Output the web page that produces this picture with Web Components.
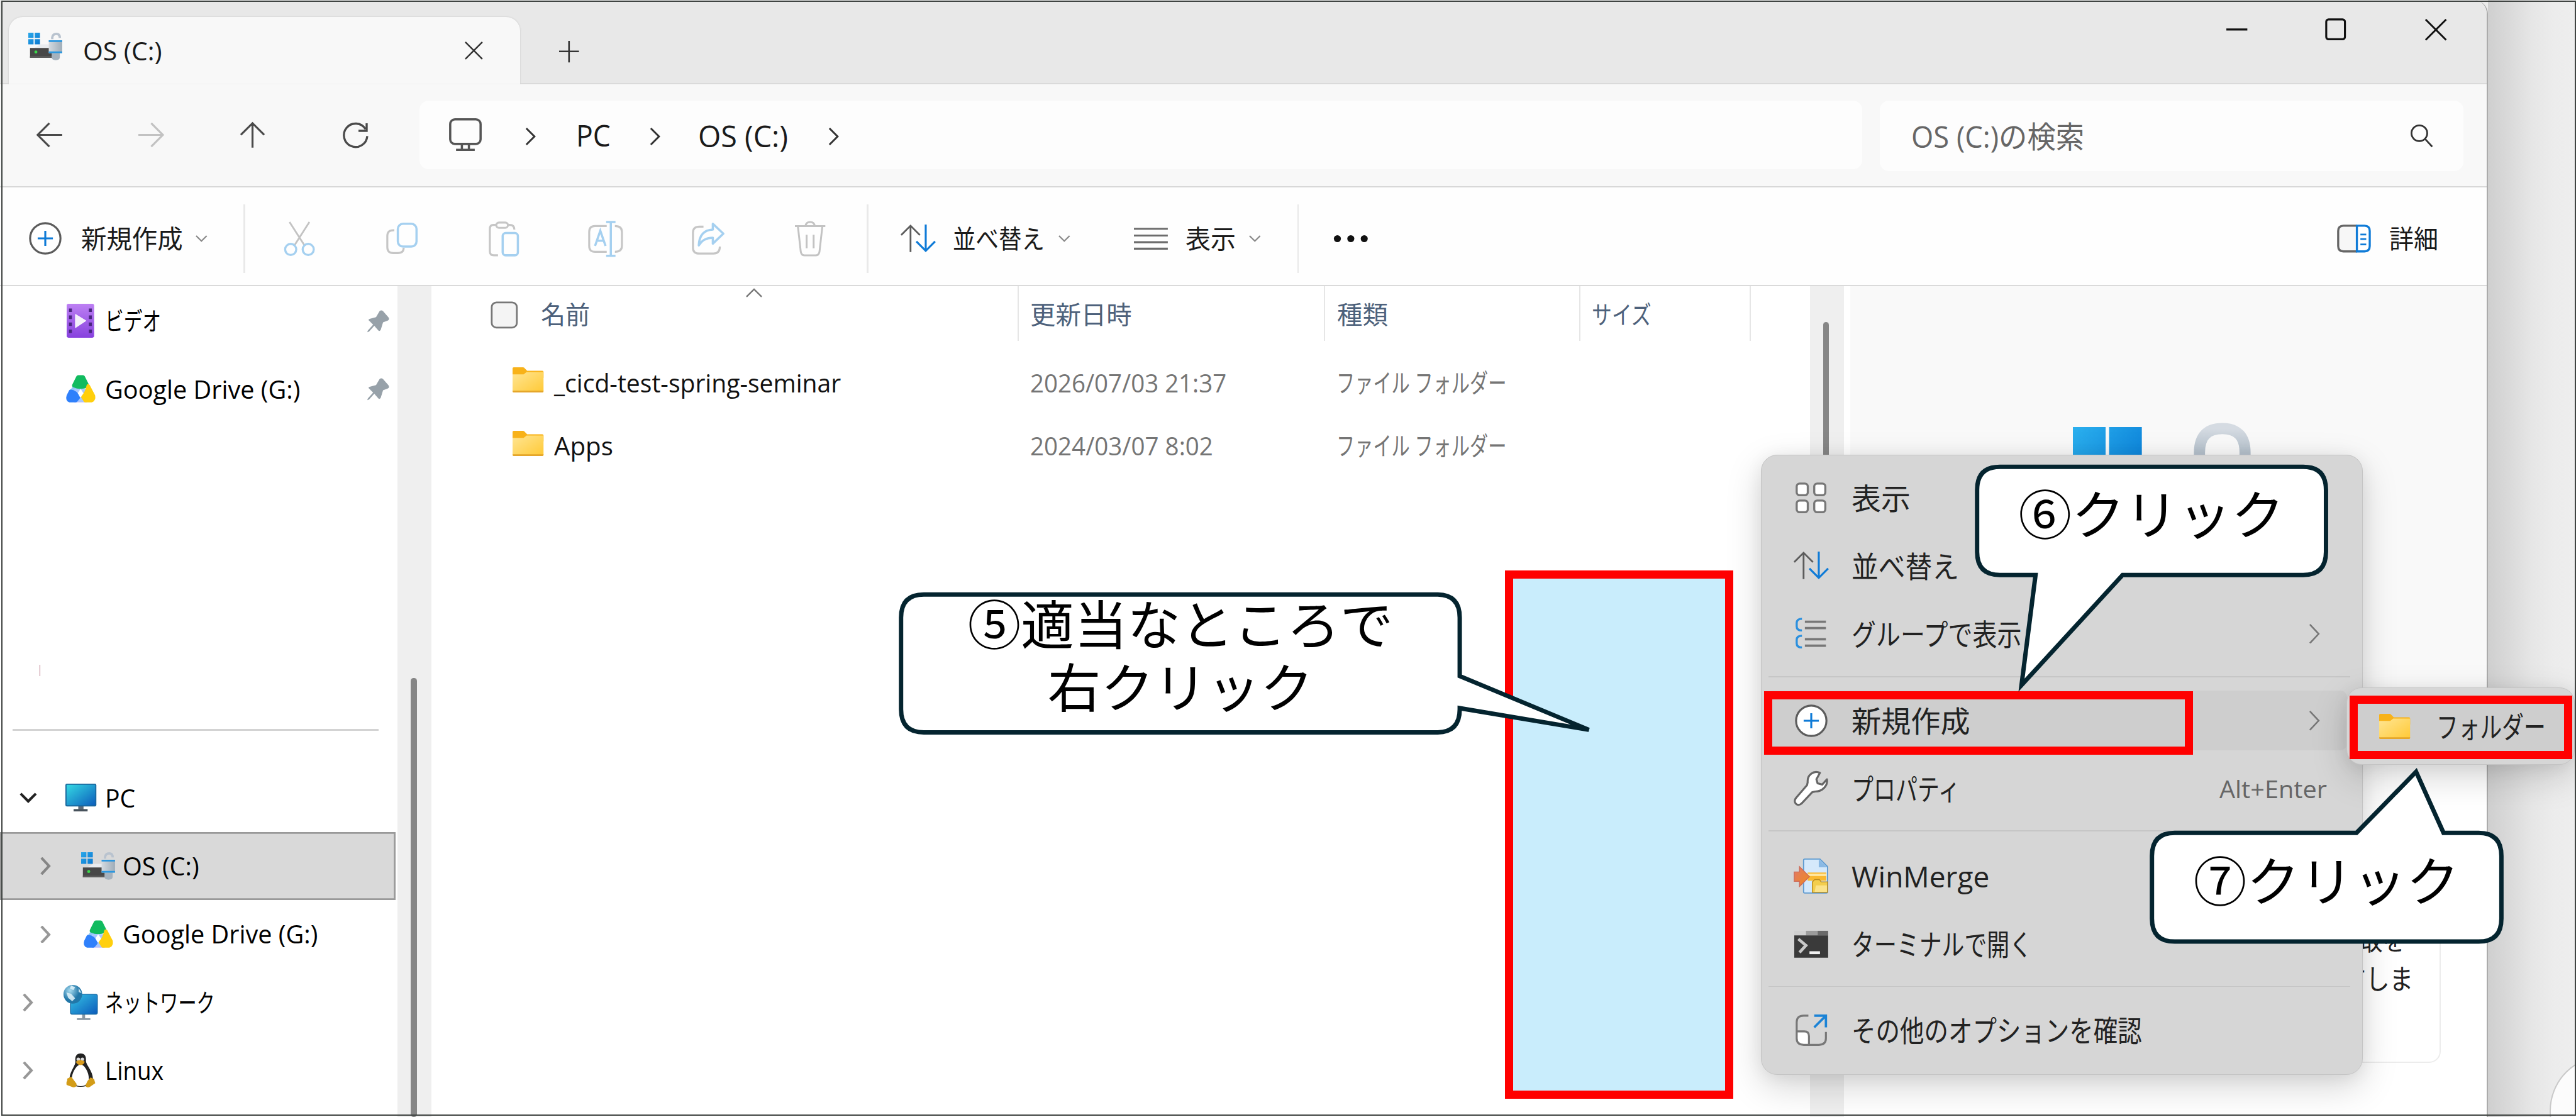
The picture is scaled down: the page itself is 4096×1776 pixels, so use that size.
<!DOCTYPE html>
<html lang="ja">
<head>
<meta charset="utf-8">
<title>OS (C:)</title>
<style>
html,body{margin:0;padding:0;width:4096px;height:1776px;overflow:hidden;background:#fff}
body{font-family:"Open Sans","Noto Sans","Noto Sans CJK JP",sans-serif;color:#1a1a1a}
</style>
</head>
<body>
<explorer-screen></explorer-screen>
<script>
const ICONS = {
  drive: [58, 47, `<defs><linearGradient id="w" x2="1" y2="1"><stop stop-color="#2aa8ea"/><stop offset="1" stop-color="#0a78d0"/></linearGradient><linearGradient id="m" x2="1"><stop stop-color="#d4dae0"/><stop offset="1" stop-color="#9eacb8"/></linearGradient></defs>
    <path fill="#e9ecef" d="M21 20h16v6H10z"/><path fill="#474747" d="M3 26h38v17H3z"/><path fill="#5a5a5a" d="M3 40h38v3H3z"/><circle cx="13" cy="33" r="2.6" fill="#3bd94a"/>
    <path fill="url(#w)" d="M0 0h9v9H0zM11 0h9v9h-9zM0 11h9v9H0zM11 11h9v9h-9z"/>
    <path d="M41 11V8q1-6 7-6t6 7" fill="none" stroke="#b9c3cf" stroke-width="4"/><path fill="#a5b2be" d="M40 34h14v8q0 5-7 5t-7-5z"/><path fill="url(#m)" d="M35 13h23v22H35z"/><path fill="#2b97df" d="M35 13h23v3H35zM35 32h23v3H35z"/>`],
  close: [31, 31, `<path d="M1 1l29 29M30 1L1 30" stroke="#333" stroke-width="2.6"/>`],
  plus: [34, 37, `<path d="M17 0v37M0 18h34" stroke="#333" stroke-width="2.8"/>`],
  min: [36, 4, `<path d="M0 2h36" stroke="#111" stroke-width="3.4"/>`],
  max: [36, 38, `<rect x="2" y="2" width="32" height="34" rx="4" fill="none" stroke="#111" stroke-width="3.4"/>`],
  wclose: [37, 37, `<path d="M1 1l35 35M36 1L1 36" stroke="#111" stroke-width="3.2"/>`],
  back: [44, 42, `<path d="M44 21H2M22 1L2 21l20 20" fill="none" stroke="#4a4a4a" stroke-width="3.4"/>`],
  fwd: [44, 42, `<path d="M0 21h42M22 1l20 20-20 20" fill="none" stroke="#c2c2c2" stroke-width="3.4"/>`],
  up: [42, 44, `<path d="M21 44V2M1 22L21 2l20 20" fill="none" stroke="#4a4a4a" stroke-width="3.4"/>`],
  refresh: [46, 46, `<path d="M40 11A20 20 0 1 0 43 23M42 1v13H28" fill="none" stroke="#4a4a4a" stroke-width="3.6"/>`],
  monitor: [56, 56, `<rect x="2" y="2" width="52" height="42" rx="8" fill="none" stroke="#555" stroke-width="3.8"/><path d="M22 44v10M34 44v10M12 54h32" stroke="#555" stroke-width="3.8"/>`],
  chev: [18, 30, `<path d="M2 1l14 14L2 29" fill="none" stroke="#333" stroke-width="3.2"/>`],
  search: [38, 40, `<circle cx="15" cy="16" r="13.5" fill="none" stroke="#333" stroke-width="3"/><path d="M25 26l12 13" stroke="#333" stroke-width="3"/>`],
  add: [56, 56, `<circle cx="28" cy="28" r="26" fill="#fff" stroke="#5c5c5c" stroke-width="3.4"/><path d="M28 15v26M15 28h26" stroke="#0f7bd7" stroke-width="3.4"/>`],
  down: [20, 11, `<path d="M1 1l9 9 9-9" fill="none" stroke="#888" stroke-width="2.4"/>`],
  cut: [52, 60, `<path d="M9 1l25 39M43 1L18 40" stroke="#c3c3c3" stroke-width="3"/><circle cx="11" cy="48" r="9.5" fill="none" stroke="#a5d0f0" stroke-width="3.6"/><circle cx="41" cy="48" r="9.5" fill="none" stroke="#a5d0f0" stroke-width="3.6"/>`],
  copy: [54, 54, `<path d="M14 13H12Q2 13 2 23v19q0 10 10 10h8q10 0 10-9" fill="none" stroke="#c6c6c6" stroke-width="3.4"/><rect x="20" y="2" width="32" height="39" rx="9" fill="none" stroke="#a5d0f0" stroke-width="3.8"/>`],
  paste: [52, 60, `<path d="M16 58H9q-7 0-7-7V13q0-7 6-7h5M33 6h3q8 0 8 8" fill="none" stroke="#c6c6c6" stroke-width="3.4"/><rect x="13" y="2" width="20" height="9" rx="4.5" fill="none" stroke="#c6c6c6" stroke-width="3.4"/><rect x="24" y="20" width="26" height="38" rx="5" fill="none" stroke="#a5d0f0" stroke-width="3.8"/>`],
  rename: [60, 60, `<path d="M32 52H12Q2 52 2 42V18Q2 8 12 8h20M46 8q12 0 12 10v24q0 10-12 10" fill="none" stroke="#c6c6c6" stroke-width="3.4"/><path d="M39 1v58M31 1h16M31 59h16M12 42l9-26 9 26M15 33h13" fill="none" stroke="#a5d0f0" stroke-width="3.8"/>`],
  share: [56, 56, `<path d="M20 8h-7Q2 8 2 18v26q0 10 11 10h24q11 0 11-12" fill="none" stroke="#c6c6c6" stroke-width="3.4"/><path d="M36 3l18 17-18 17V27q-16 0-24 13 1-26 24-27z" fill="none" stroke="#a5d0f0" stroke-width="3.8" stroke-linejoin="round"/>`],
  trash: [52, 60, `<path d="M0 8h52M18 8q1-7 8-7t8 7M5 8l5 44q1 6 6 6h20q5 0 6-6l5-44M20 23v23M32 23v23" fill="none" stroke="#c3c3c3" stroke-width="3.2"/>`],
  sort: [60, 48, `<path d="M17 47V2M1 18L17 2l16 16" fill="none" stroke="#5c5c5c" stroke-width="3"/><path d="M43 0v45M27 29l16 16 16-16" fill="none" stroke="#0f7bd7" stroke-width="3.4"/>`],
  lines: [58, 40, `<path d="M0 3h58M0 14.500h58M0 26h58M0 37h58" stroke="#6c6c6c" stroke-width="3.4"/>`],
  dots: [60, 14, `<circle cx="7" cy="7" r="6" fill="#111"/><circle cx="30" cy="7" r="6" fill="#111"/><circle cx="53" cy="7" r="6" fill="#111"/>`],
  details: [58, 48, `<rect x="2" y="2" width="54" height="44" rx="9" fill="#f7f7f7"/><path d="M34 2H11Q2 2 2 11v26q0 9 9 9h23" fill="none" stroke="#666" stroke-width="3.6"/><path d="M34 2h13q9 0 9 9v26q0 9-9 9H34z" fill="#fff" stroke="#0f7bd7" stroke-width="3.6"/><path d="M40 17h10M40 25h10M40 34h10" stroke="#0f7bd7" stroke-width="3"/>`],
  video: [48, 58, `<defs><linearGradient id="v" x2="0" y2="1"><stop stop-color="#bd80f3"/><stop offset="1" stop-color="#8741de"/></linearGradient></defs><rect width="47" height="58" rx="3" fill="url(#v)"/><path fill="#48257e" d="M4 8h5v6H4zM4 20h5v6H4zM4 32h5v6H4zM4 44h5v6H4zM38 8h5v6h-5zM38 20h5v6h-5zM38 32h5v6h-5zM38 44h5v6h-5z"/><path d="M15 18l18 11-18 12z" fill="#f4f0fa" stroke="#fff" stroke-linejoin="round"/>`],
  gdrive: [52, 48, `<path d="M15 16L3 35l12 5 12-19z" fill="#8fc7f5"/><path d="M15 38h22v9H15z" fill="#b9b4f8"/><path d="M16 24h20l7 14-8 8H17l-8-8z" fill="#a8c8ff"/><path d="M26 24l9 14H17z" fill="#fff"/><path d="M22 4h8l7 14q-11 5-22 0z" fill="#11bb5f" stroke="#11bb5f" stroke-width="7" stroke-linejoin="round"/><path d="M9 28q9 1 13 11l-4 5H7q-4-2-2-8z" fill="#2f80fb" stroke="#2f80fb" stroke-width="6" stroke-linejoin="round"/><path d="M39 19l9 17q1 6-3 8H34l-4-6q7-8 9-19z" fill="#ffcf0d" stroke="#ffcf0d" stroke-width="6" stroke-linejoin="round"/>`],
  pin: [38, 38, `<path d="M21 2q3-3 6 0l9 10q3 4-1 6l-8 3-4 13q-2 3-4 1l-7-8-9 10-3 1 1-3 9-10-7-7q-2-2 1-3l11-3z" fill="#97a1a9"/>`],
  pc: [53, 48, `<defs><linearGradient id="p" x2="1" y2="1"><stop stop-color="#35dbe4"/><stop offset="1" stop-color="#0c5bbb"/></linearGradient></defs><path fill="#5d6b78" d="M22 38h9v6h-9z"/><rect x="1" y="1" width="51" height="37" rx="1.500" fill="url(#p)" stroke="#19679c" stroke-width="2"/><path d="M14 45.500h24" stroke="#47525c" stroke-width="4"/>`],
  net: [60, 60, `<defs><linearGradient id="n" x2="1" y2="1"><stop stop-color="#35c3e4"/><stop offset="1" stop-color="#0c5bbb"/></linearGradient><radialGradient id="g" cx=".35" cy=".3"><stop stop-color="#a8dcf0"/><stop offset="1" stop-color="#2277a8"/></radialGradient></defs><path fill="#8997a3" d="M33 49h5v8h9v3H24v-3h9z"/><rect x="13" y="16" width="46" height="34" rx="3" fill="url(#n)" stroke="#1a6ba5" stroke-width="1.500"/><circle cx="17" cy="16" r="16" fill="url(#g)"/><path d="M6 13l8 2 7 8-5 5-7-6zM14 1l7 3-3 5-6-3zM27 5l5 9-5-2z" fill="#e2f3fa" opacity=".85"/>`],
  tux: [50, 60, `<path d="M25 1c7 0 10 5 9 13 0 6 12 18 12 30 0 8-8 14-21 14S5 52 6 43c1-12 11-22 10-29C15 6 18 1 25 1z" fill="#222"/><path d="M25 20c6 0 14 13 14 24 0 8-6 13-14 13S10 52 10 44c0-11 9-24 15-24z" fill="#fff"/><circle cx="21" cy="11" r="3" fill="#ddd"/><circle cx="28" cy="11" r="3" fill="#ddd"/><path d="M17 15q7-5 15 0-1 5-7 6-7-1-8-6z" fill="#d79a1c"/><path d="M2 44l7-3 9 12q1 6-6 6L1 55q-1-5 1-7zM48 45l-6-3-5 6-4 8q2 5 8 2l9-6z" fill="#d39c17"/>`],
  folder: [53, 43, `<defs><linearGradient id="f" x2="1" y2="1"><stop stop-color="#ffe593"/><stop offset="1" stop-color="#ffc935"/></linearGradient></defs><path d="M0 2q0-2 2-2h16q2 0 3 2l4 4h26q2 0 2 2v10H0z" fill="#f8b219"/><path d="M0 12h19l5-4h29v33q0 2-2 2H2q-2 0-2-2z" fill="url(#f)"/><path d="M0 40h53v1q0 2-2 2H2q-2 0-2-2z" fill="#e5a62a"/>`],
  caret: [28, 16, `<path d="M1 15L14 2l13 13" fill="none" stroke="#777" stroke-width="2.6"/>`],
  check: [47, 47, `<rect x="2" y="2" width="43" height="43" rx="8" fill="#f4f4f4" stroke="#777" stroke-width="3"/>`],
  tiles: [54, 54, `<g fill="#fff" stroke="#777" stroke-width="3.6"><rect x="2" y="2" width="19" height="20" rx="5"/><rect x="32" y="2" width="19" height="20" rx="5"/><rect x="2" y="31" width="19" height="20" rx="5"/><rect x="32" y="31" width="19" height="20" rx="5"/></g>`],
  group: [54, 54, `<path d="M11 2Q2 2 2 9v6q0 7 9 7M11 31q-9 0-9 7v6q0 7 9 7" fill="none" stroke="#2c90de" stroke-width="3.6"/><path d="M16 7h36M16 18h36M16 37h36M16 48h36" stroke="#777" stroke-width="4"/>`],
  wrench: [60, 60, `<path d="M45 3C34-2 23 7 24 19l-1 5L4 46c-6 8 3 16 10 9l18-19 5-1c12 0 22-10 20-21l-8 9-8-2-2-7z" fill="#fff" stroke="#666" stroke-width="3.4" stroke-linejoin="round"/>`],
  winmerge: [60, 60, `<defs><linearGradient id="a" x2="1" y2="1"><stop stop-color="#e1796a"/><stop offset="1" stop-color="#f08a1a"/></linearGradient></defs><path d="M17 3q0-2 2-2h26l13 13v43q0 2-2 2H19q-2 0-2-2z" fill="#d5e9fb" stroke="#5d9ad0" stroke-width="2"/><path d="M43 1v14h14z" fill="#8ab9e4"/><path d="M24 24h32v14H24z" fill="#fab92f"/><path d="M24 26h32v4H24z" fill="#ffe7a0"/><path d="M1 23h9v-9l17 17-17 17v-9H1z" fill="url(#a)" stroke="#ce6b58" stroke-width="1.500"/><path d="M32 40l4-4h8l3 4h11v18H32z" fill="#f3ce4e" stroke="#b98a1c" stroke-width="1.500"/><path d="M38 46h19v11H36z" fill="#fbe38b"/>`],
  terminal: [58, 47, `<path fill="#cfcfcf" d="M0 1h20v8H0z"/><path fill="#9b9b9b" d="M20 1h20v8H20z"/><path fill="#6a6a6a" d="M40 1h18v8H40z"/><path fill="#3a3a3a" d="M0 9h58v38H0z"/><path d="M7 15l13 11-11 12" fill="none" stroke="#c8c8c8" stroke-width="5"/><path d="M26 38.500h18" stroke="#f0f0f0" stroke-width="5"/>`],
  more: [54, 54, `<path d="M2 29h13q8 0 8 8v15H12Q2 52 2 42z" fill="#fff"/><path d="M22 2H14Q2 2 2 13v28q0 11 12 11h26q12 0 12-11V30M2 29h13q8 0 8 8v15" fill="none" stroke="#777" stroke-width="3.4"/><path d="M32 2h20v20M52 2L32 22" fill="none" stroke="#1b83d6" stroke-width="4"/>`],
  winlogo: [120, 120, `<defs><linearGradient id="l" gradientUnits="userSpaceOnUse" x1="0" y1="0" x2="120" y2="80"><stop stop-color="#2bb0ee"/><stop offset="1" stop-color="#0a7fd8"/></linearGradient></defs><path fill="url(#l)" d="M0 0h56v56H0zM62 0h56v56H62zM0 62h56v56H0zM62 62h56v56H62z"/>`],
  shackle: [98, 120, `<defs><linearGradient id="k" x2="0" y2="1"><stop stop-color="#d5dbe2"/><stop offset=".5" stop-color="#b5c1cc"/></linearGradient></defs><path d="M10 90V50q0-41 39-41t39 41v12" fill="none" stroke="url(#k)" stroke-width="19"/>`]
};

/* Base class: clones the class template into an open shadow root. */
class Base extends HTMLElement {
  constructor() {
    super();
    this.attachShadow({mode: 'open'});
  }
  connectedCallback() {
    if (this.shadowRoot.childNodes.length) return;
    const t = document.createElement('template');
    t.innerHTML = this.render();
    this.shadowRoot.append(document.importNode(t.content, true));
  }
  a(n, d = '') { return this.hasAttribute(n) ? this.getAttribute(n) : d; }
}

class UiIcon extends Base {
  render() {
    const [w, h, body] = ICONS[this.a('name')];
    return `<style>:host{display:block;flex:none;width:${w}px;height:${h}px}svg{display:block;overflow:visible}</style>
    <svg width="${w}" height="${h}" viewBox="0 0 ${w} ${h}">${body}</svg>`;
  }
}

/* One line of text, condensed or widened horizontally to the width in "w". */
const labels = [];
class UiText extends Base {
  render() {
    labels.push(this);
    return `<style>:host{display:block;flex:none;width:${this.a('w')}px;white-space:pre;line-height:1;font-size:${this.a('s', 43)}px}span{display:inline-block;transform-origin:0 50%}</style><span><slot></slot></span>`;
  }
  fit() {
    const s = this.shadowRoot.querySelector('span');
    const r = this.getBoundingClientRect().width / s.getBoundingClientRect().width;
    s.style.transform = `scaleX(${r})`;
  }
}

class TitleBar extends Base {
  render() { return `<style>
    :host{display:flex;box-sizing:border-box;height:144px;background:#e8e8e8;border-bottom:3px solid #dadada}
    .tab{display:flex;align-items:center;box-sizing:border-box;width:875px;height:115px;margin:29px 0 -3px 15px;padding-left:33px;background:#f8f8f8;border-radius:24px 24px 0 0;box-shadow:0 0 2px 1px #d8d8d8;clip-path:inset(-4px -4px 0 -4px)}
    .plus{margin:70px 0 0 67px}
    .ctl{display:flex;align-items:center;height:101px;margin-left:auto;padding-right:68px}
  </style>
  <div class="tab"><ui-icon name="drive" style="margin-bottom:14px"></ui-icon><ui-text w="135" s="44" style="margin-left:36px">OS (C:)</ui-text><ui-icon name="close" style="margin-left:518px"></ui-icon></div>
  <ui-icon class="plus" name="plus"></ui-icon>
  <div class="ctl"><ui-icon name="min"></ui-icon><ui-icon name="max" style="margin-left:133px"></ui-icon><ui-icon name="wclose" style="margin-left:135px"></ui-icon></div>`; }
}

class NavBar extends Base {
  render() { return `<style>
    :host{display:flex;align-items:flex-start;box-sizing:border-box;height:177px;padding:28px 39px 0 62px;background:#f8f8f8;border-bottom:3px solid #d8d8d8}
    .btns{display:flex;align-items:center;height:118px;width:656px}
    .box{display:flex;align-items:center;box-sizing:border-box;height:117px;border-radius:16px;background:#fdfdfd}
    .addr{width:2469px;padding-left:50px}
    .find{width:999px;height:121px;margin-left:auto;padding:0 53px 0 54px;color:#666}
  </style>
  <div class="btns"><ui-icon name="back"></ui-icon><ui-icon name="fwd" style="margin-left:131px"></ui-icon><ui-icon name="up" style="margin-left:130px"></ui-icon><ui-icon name="refresh" style="margin-left:132px;margin-top:3px"></ui-icon></div>
  <div class="box addr"><ui-icon name="monitor"></ui-icon><ui-icon name="chev" style="margin:5px 0 0 75px"></ui-icon><ui-text w="59" s="52" style="margin-left:69px">PC</ui-text><ui-icon name="chev" style="margin:5px 0 0 67px"></ui-icon><ui-text w="154" s="52" style="margin:2px 0 0 65px">OS (C:)</ui-text><ui-icon name="chev" style="margin:5px 0 0 68px"></ui-icon></div>
  <div class="box find"><ui-text w="296" s="52">OS (C:)の検索</ui-text><ui-icon name="search" style="margin-left:auto"></ui-icon></div>`; }
}

class ToolBar extends Base {
  render() { return `<style>
    :host{display:flex;align-items:center;box-sizing:border-box;height:169px;padding:8px 83px 0 50px;background:#fefefe;border-bottom:3px solid #dadada}
    i{flex:none;width:3px;height:117px;background:#e9e9e9}
    ui-text{margin-top:2px}
  </style>
  <ui-icon name="add"></ui-icon><ui-text w="174" s="43.500" style="margin-left:33px">新規作成</ui-text><ui-icon name="down" style="margin-left:22px"></ui-icon>
  <i style="margin-left:62px"></i>
  <ui-icon name="cut" style="margin-left:67px"></ui-icon><ui-icon name="copy" style="margin-left:122px"></ui-icon><ui-icon name="paste" style="margin-left:121px"></ui-icon><ui-icon name="rename" style="margin-left:118px"></ui-icon><ui-icon name="share" style="margin-left:118px"></ui-icon><ui-icon name="trash" style="margin-left:120px"></ui-icon>
  <i style="margin-left:71px"></i>
  <ui-icon name="sort" style="margin-left:55px"></ui-icon><ui-text w="157" s="43.500" style="margin-left:30px">並べ替え</ui-text><ui-icon name="down" style="margin-left:23px"></ui-icon>
  <ui-icon name="lines" style="margin-left:110px"></ui-icon><ui-text w="86" s="43.500" style="margin-left:30px">表示</ui-text><ui-icon name="down" style="margin-left:23px"></ui-icon>
  <i style="margin-left:62px"></i>
  <ui-icon name="dots" style="margin-left:59px"></ui-icon>
  <ui-icon name="details" style="margin-left:auto"></ui-icon><ui-text w="84" s="43.500" style="margin-left:31px">詳細</ui-text>`; }
}

class ScrollBar extends Base {
  render() { return `<style>
    :host{display:block;flex:none;box-sizing:border-box;width:58px;height:100%;background:#efefef;padding:${this.a('from')}px 0 ${this.a('rest', 0)}px 23px}
    div{width:10px;height:100%;border-radius:5px;background:#868686}
  </style><div></div>`; }
}

class TreeItem extends Base {
  render() {
    const o = this.a('open');
    return `<style>
    :host{display:flex;align-items:center;box-sizing:border-box;flex:none;height:116.600px;width:680px;padding:0 14px 0 ${18 + 30 * +this.a('level', 0)}px;color:#000}
    :host([selected]){width:677px;background:#d9d9d9;box-shadow:inset 0 0 0 3px #999}
    .c,.i{display:flex;justify-content:center;flex:none}.c{width:60px}.i{width:70px;margin:0 7px 0 25px}
    .p{margin:0 0 0 auto}
    .c.n{opacity:.55}
  </style>
  <div class="c ${o === 'no' ? 'n' : ''}">${o === 'yes' ? `<svg width="30" height="18"><path d="M2 2l13 13L28 2" fill="none" stroke="#222" stroke-width="4.500"/></svg>` : o === 'no' ? `<svg width="18" height="30"><path d="M2 1l13 14L2 29" fill="none" stroke="#444" stroke-width="4.500"/></svg>` : ''}</div>
  <div class="i"><ui-icon name="${this.a('icon')}"></ui-icon></div>
  <ui-text w="${this.a('w')}" s="43"><slot></slot></ui-text>
  ${this.hasAttribute('pin') ? '<ui-icon class="p" name="pin"></ui-icon>' : ''}`; }
}

class NavTree extends Base {
  render() { return `<style>
    :host{display:flex;flex-direction:column;flex:none;box-sizing:border-box;width:680px;height:100%;padding-top:1px;background:#fff}
    .tick{width:1.500px;height:20px;margin:413px 0 0 67.500px;background:#b0657a}
    .sep{width:627px;height:3px;margin:90px 0 57px 21px;background:#d3d3d3}
  </style>
  <tree-item icon="video" w="96" pin>ビデオ</tree-item>
  <tree-item icon="gdrive" w="334" pin>Google Drive (G:)</tree-item>
  <div class="tick"></div><div class="sep"></div>
  <tree-item icon="pc" w="52" open="yes">PC</tree-item>
  <tree-item icon="drive" w="131" level="1" open="no" selected>OS (C:)</tree-item>
  <tree-item icon="gdrive" w="334" level="1" open="no">Google Drive (G:)</tree-item>
  <tree-item icon="net" w="188" open="no">ネットワーク</tree-item>
  <tree-item icon="tux" w="100" open="no">Linux</tree-item>`; }
}

class FileRow extends Base {
  render() { return `<style>
    :host{display:grid;grid-template-columns:1005px 525px 436px 292px;height:108px;align-items:center;color:#757575}
    .n{display:flex;align-items:center;padding-left:139px;color:#111}
    .d{padding-left:20px}
  </style>
  <div class="n"><ui-icon name="folder" style="margin:-9px 18px 0 0"></ui-icon><ui-text w="${this.a('w')}" s="43"><slot></slot></ui-text></div>
  <div class="d"><ui-text w="${this.a('dw')}" s="43">${this.a('date')}</ui-text></div>
  <div class="d" style="padding-left:19px"><ui-text w="291" s="44">ファイル フォルダー</ui-text></div>`; }
}

class FileList extends Base {
  render() { return `<style>
    :host{display:block;flex:none;width:2359px;height:100%;background:#fff}
    .head{position:relative;display:grid;grid-template-columns:1005px 525px 436px 292px;height:93px;margin-bottom:18px;color:#4d617b}
    .head>div{display:flex;align-items:center;box-sizing:border-box;padding:4px 0 0 20px;border-right:3px solid #e6e6e6}
    .head>div:first-child{padding-left:101px}
    .sort{position:absolute;left:538px;top:3px}
  </style>
  <div class="head"><div><ui-icon name="check"></ui-icon><ui-text w="84" s="43" style="margin-left:40px">名前</ui-text></div><div><ui-text w="174" s="43">更新日時</ui-text></div><div><ui-text w="87" s="43">種類</ui-text></div><div style="padding-left:20px"><ui-text w="102" s="43">サイズ</ui-text></div><ui-icon class="sort" name="caret"></ui-icon></div>
  <file-row w="491" date="2026/07/03 21:37" dw="336">_cicd-test-spring-seminar</file-row>
  <file-row w="101" date="2024/03/07 8:02" dw="313">Apps</file-row>`; }
}

class DetailsPane extends Base {
  render() { return `<style>
    :host{display:flex;flex-direction:column;flex:1;height:100%;box-sizing:border-box;border-left:11px solid #fff;background:#fff}
    .hero{display:flex;align-items:flex-start;height:750px;box-sizing:border-box;background:#f9f9f9;padding:234px 0 0 381px}
    .card{box-sizing:border-box;width:970px;height:260px;margin:319px 0 0 41px;border:3px solid #ececec;border-radius:20px;display:flex;flex-direction:column;align-items:flex-end;padding:27px 46px 0 0;gap:20px;color:#222}
  </style>
  <div class="hero"><ui-icon name="winlogo" style="margin-top:7px"></ui-icon><ui-icon name="shackle" style="margin-left:87px"></ui-icon></div>
  <div class="card"><ui-text w="78" s="43" style="margin-right:13px">取を</ui-text><ui-text w="122" s="48" style="margin-right:-1px">すしま</ui-text></div>`; }
}

class ExplorerWindow extends Base {
  render() { return `<style>
    :host{display:flex;flex-direction:column;flex:none;width:4257px;height:1911px;box-sizing:border-box;border-right:3px solid #ababab;border-top-right-radius:24px;overflow:hidden;background:#fff}
    .body{display:flex;flex:1;min-height:0;overflow:hidden}
  </style>
  <title-bar></title-bar><nav-bar></nav-bar><tool-bar></tool-bar>
  <div class="body"><nav-tree></nav-tree><scroll-bar from="670"></scroll-bar><file-list></file-list><scroll-bar from="61" rest="200"></scroll-bar><details-pane></details-pane></div>`; }
}

class DesktopStrip extends Base {
  render() { return `<style>
    :host{display:flex;flex-direction:column;flex:1;height:1911px;overflow:hidden;background:linear-gradient(90deg,#cfcfcf,#dadada 25%,#e6e6e6 50%,#ececec 75%,#eee)}
    .dash{height:4px;margin:1055px 0 0 11px;background:repeating-linear-gradient(90deg,#a6a6a6 0 8.600px,transparent 8.600px 17.300px)}
    .ball{flex:none;box-sizing:border-box;width:190px;height:190px;margin:751px 0 0 106px;border:3px solid #c9c9c9;border-radius:50%;background:#fcfcfc}
  </style><div class="dash"></div><div class="ball"></div>`; }
}

class MenuItem extends Base {
  render() { return `<style>
    :host{display:flex;align-items:center;box-sizing:border-box;height:${this.a('h', 116)}px;padding:0 ${this.a('pr', 72)}px 0 ${this.a('pl', 53)}px;color:#222}
    .i{display:flex;flex:none;justify-content:center;width:64px;margin-right:${this.a('gap', 37)}px}
    .k{margin-left:auto;color:#666}
    ui-text{margin-top:1px}
  </style>
  <div class="i"><ui-icon name="${this.a('icon')}"></ui-icon></div><ui-text w="${this.a('w')}" s="50"><slot></slot></ui-text>
  ${this.hasAttribute('sub') ? '<svg class="k" width="19" height="34"><path d="M2 1l15 16L2 33" fill="none" stroke="#777" stroke-width="2.800"/></svg>' : ''}
  ${this.hasAttribute('key') ? `<ui-text class="k" w="184" s="42" style="margin-right:-12px">${this.a('key')}</ui-text>` : ''}`; }
}

class ContextMenu extends Base {
  render() { return `<style>
    :host{display:flex;flex-direction:column;box-sizing:border-box;background:#d6d6d6;border:2px solid #c4c4c4;border-radius:28px;box-shadow:0 20px 60px rgba(0,0,0,.17),0 4px 30px rgba(0,0,0,.06)}
  </style><slot></slot>`; }
}

class RedFrame extends Base {
  render() { return `<style>:host{display:block;box-sizing:border-box;border:14px solid #f00}</style>`; }
}

class CallOut extends Base {
  render() { return `<style>
    :host{display:flex;flex-direction:column;align-items:center;box-sizing:border-box;color:#000}
    svg{position:absolute;left:0;top:0;overflow:visible}
    div{position:relative;font-size:91px;line-height:107px;text-align:center;white-space:nowrap}
  </style><svg width="1" height="1"><path d="${this.a('shape')}" fill="#fff" stroke="#04242f" stroke-width="7.500" stroke-miterlimit="${this.a('miter', 8)}"/></svg><div><slot></slot></div>`; }
}

class ExplorerScreen extends Base {
  render() { return `<style>
    :host{display:flex;position:relative;width:4408px;height:1911px;overflow:hidden;zoom:.929219;background:#ebebeb}
    .over{position:absolute}
    .edge{position:absolute;left:2px;top:1px;right:0;bottom:2px;border:3px solid #404442;pointer-events:none}
    hr{flex:none;width:996px;height:2px;margin:0 0 0 12px;border:0;background:#c6c6c6}
    .hov{background:#cecece;margin:0 26px 0 8px;border-radius:12px}
  </style>
  <explorer-window></explorer-window><desktop-strip></desktop-strip>
  <red-frame class="over" style="left:2575px;top:976px;width:391px;height:904px;background:#c9edfc"></red-frame>
  <context-menu class="over" style="left:3013px;top:778px;width:1030px;height:1061px;padding-top:15px">
    <menu-item icon="tiles" w="101">表示</menu-item>
    <menu-item icon="sort" w="184">並べ替え</menu-item>
    <menu-item icon="group" w="291" sub>グループで表示</menu-item>
    <hr style="margin-top:15px">
    <menu-item class="hov" style="margin-top:23px" icon="add" w="203" sub h="102" pl="45" pr="46">新規作成</menu-item>
    <menu-item icon="wrench" w="186" key="Alt+Enter" style="margin-top:7px">プロパティ</menu-item>
    <hr style="margin-top:14px">
    <menu-item icon="winmerge" w="236" style="margin-top:18px">WinMerge</menu-item>
    <menu-item icon="terminal" w="309">ターミナルで開く</menu-item>
    <hr style="margin-top:14px">
    <menu-item icon="more" w="497" style="margin-top:16px">その他のオプションを確認</menu-item>
  </context-menu>
  <context-menu class="over" style="left:4015px;top:1176px;width:391px;height:133px;border-radius:26px;padding-top:13px">
    <menu-item class="hov" style="margin:0 8px" icon="folder" w="187" h="105" pl="42" pr="0" gap="39">フォルダー</menu-item>
  </context-menu>
  <red-frame class="over" style="left:3019px;top:1183px;width:734px;height:108px"></red-frame>
  <red-frame class="over" style="left:4021px;top:1190px;width:381px;height:109px"></red-frame>
  <call-out class="over" style="left:1538px;top:1014px;width:964px;height:243px;padding-top:1px" miter="3"
    shape="M43 3.500H921Q960 3.500 960 43V143L1181 235 960 198V200Q960 239.500 921 239.500H43Q4 239.500 4 200V43Q4 3.500 43 3.500Z">⑤適当なところで<br>右クリック</call-out>
  <call-out class="over" style="left:3379px;top:795px;width:605px;height:192px;padding-top:31px"
    shape="M43 3.500H562Q601 3.500 601 43V149Q601 188.500 562 188.500H253L80 377 104 188.500H43Q4 188.500 4 149V43Q4 3.500 43 3.500Z">⑥クリック</call-out>
  <call-out class="over" style="left:3678px;top:1422px;width:606px;height:193px;padding-top:32px"
    shape="M43 3.500H354L456-101 503 3.500H563Q602 3.500 602 43V150Q602 189.500 563 189.500H43Q4 189.500 4 150V43Q4 3.500 43 3.500Z">⑦クリック</call-out>
  <div class="edge"></div>`; }
}

for (const [n, c] of Object.entries({
  'ui-icon': UiIcon, 'ui-text': UiText, 'title-bar': TitleBar, 'nav-bar': NavBar, 'tool-bar': ToolBar,
  'scroll-bar': ScrollBar, 'tree-item': TreeItem, 'nav-tree': NavTree, 'file-row': FileRow, 'file-list': FileList,
  'details-pane': DetailsPane, 'explorer-window': ExplorerWindow, 'desktop-strip': DesktopStrip,
  'menu-item': MenuItem, 'context-menu': ContextMenu, 'red-frame': RedFrame, 'call-out': CallOut,
  'explorer-screen': ExplorerScreen
})) customElements.define(n, c);
labels.forEach(l => l.fit());
</script>
</body>
</html>
